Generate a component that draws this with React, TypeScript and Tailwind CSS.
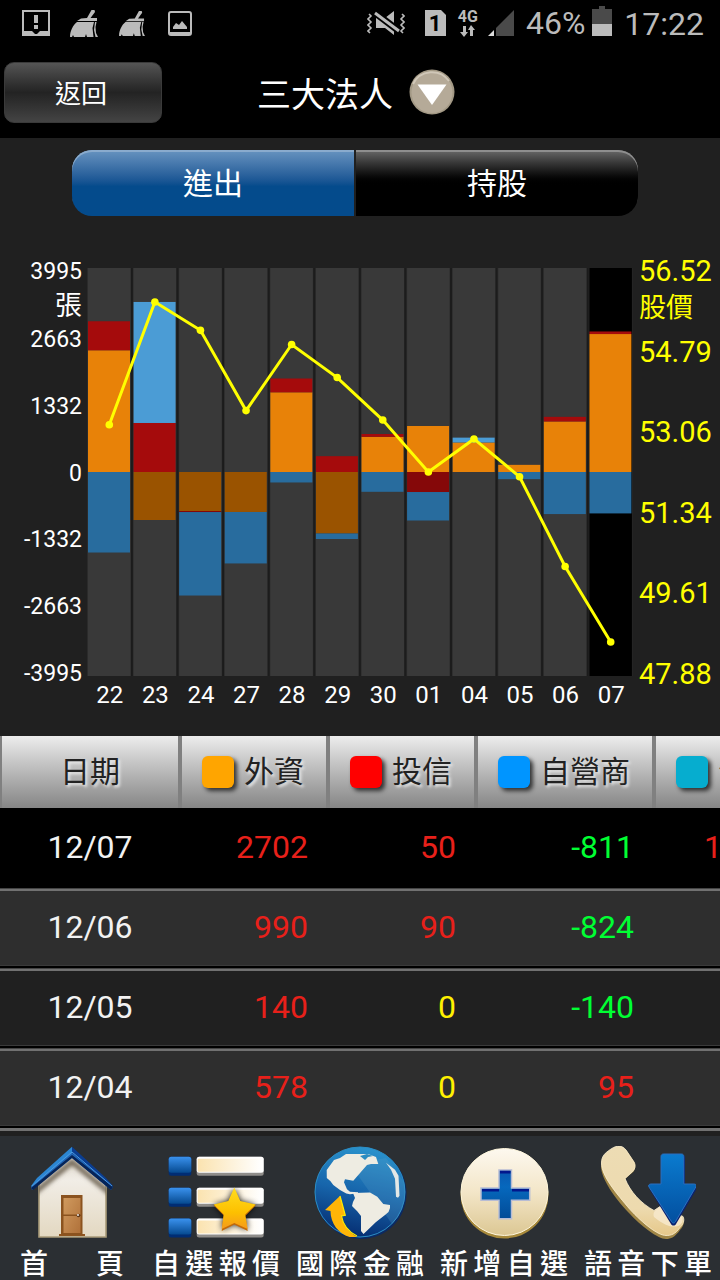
import type { ReactNode } from 'react';
import clsx from 'clsx';

type Day = {
    date: string;
    foreign: number;
    trust: number;
    dealer: number;
    price: number;
};

const days: Day[] = [
    { date: '11/22', foreign: 2384, trust: 568, dealer: -1577, price: 53.2 },
    { date: '11/23', foreign: -940, trust: 960, dealer: 2370, price: 55.8 },
    { date: '11/24', foreign: -764, trust: -20, dealer: -1635, price: 55.2 },
    { date: '11/27', foreign: -783, trust: 0, dealer: -1008, price: 53.5 },
    { date: '11/28', foreign: 1561, trust: 270, dealer: -205, price: 54.9 },
    { date: '11/29', foreign: -1204, trust: 310, dealer: -108, price: 54.2 },
    { date: '11/30', foreign: 689, trust: 55, dealer: -388, price: 53.3 },
    { date: '12/01', foreign: 901, trust: -392, dealer: -558, price: 52.2 },
    { date: '12/04', foreign: 578, trust: 0, dealer: 95, price: 52.9 },
    { date: '12/05', foreign: 140, trust: 0, dealer: -140, price: 52.1 },
    { date: '12/06', foreign: 990, trust: 90, dealer: -824, price: 50.2 },
    { date: '12/07', foreign: 2702, trust: 50, dealer: -811, price: 48.6 },
];

const volumeTicks = ['3995', '2663', '1332', '0', '-1332', '-2663', '-3995'];
const priceTicks = ['56.52', '54.79', '53.06', '51.34', '49.61', '47.88'];

const MAX_VOLUME = 3995;
const MAX_PRICE = 56.52;
const MIN_PRICE = 47.88;
const PLOT_W = 547;
const PLOT_H = 408;
const STEP = PLOT_W / days.length;

const colors = {
    foreign: ['#e88208', '#9a5300'],
    trust: ['#a50b0c', '#850809'],
    dealer: ['#4b9cd5', '#286c9e'],
};

function Broom({ className }: { className: string }) {
    return (
        <svg viewBox="0 0 28 27" className={className} fill="#bbbbbb" aria-hidden="true">
            <path d="M21.500 0h3l.5 2-4.500 6H27v3H7l4-2.500 6-.5z" />
            <path d="M7 12h17l-1.500 6 1 9H17l-1-3-1 3H4l-1-2-1 2H0c0-6 3-12 7-15z" />
            <path d="M25 12h1.500l-1 5 .5 6 2 4h-2.500L24 20z" />
        </svg>
    );
}

function StatusBar() {
    return (
        <div className="flex h-[46px] items-center justify-between pr-4 pl-[22px] text-[#bbbbbb]">
            <div className="flex items-center">
                <svg viewBox="0 0 28 26" className="h-[26px] w-7" aria-hidden="true">
                    <path d="M1 1h26v24H1z" fill="none" stroke="#bbbbbb" strokeWidth="2" />
                    <path d="M1 21h9l4 4 4-4h9v4H1z" fill="#bbbbbb" />
                    <path d="M12 5h4v8h-4zM12 15h4v4h-4z" fill="#bbbbbb" />
                </svg>
                <Broom className="ml-5 h-[27px] w-7" />
                <Broom className="ml-[21px] h-[25px] w-[26px]" />
                <svg viewBox="0 0 24 25" className="ml-[23px] h-[25px] w-6" aria-hidden="true">
                    <rect x="1" y="1" width="22" height="23" rx="2" fill="none" stroke="#bbbbbb" strokeWidth="2" />
                    <path d="M1 21h22v2l-1 1H2l-1-1z" fill="#bbbbbb" />
                    <path d="M5 18v-2l3-4 3 2 3-4 5 6v2z" fill="#bbbbbb" />
                </svg>
            </div>
            <div className="flex items-center">
                <svg viewBox="0 0 38 26" className="h-[26px] w-[38px]" aria-hidden="true">
                    <path d="M9 8h9l9-7v24l-9-7H9z" fill="#bbbbbb" />
                    <path d="M7 2l25 19" stroke="#000000" strokeWidth="7" />
                    <path d="M8 3l24 18" stroke="#bbbbbb" strokeWidth="3" />
                    <path
                        d="M2 4l2 2-3 3 3 3-3 3 3 3-3 3 2 2M35 4l2 2-3 3 3 3-3 3 3 3-3 3 2 2"
                        fill="none"
                        stroke="#bbbbbb"
                        strokeWidth="1.600"
                    />
                </svg>
                <svg viewBox="0 0 21 26" className="ml-5 h-[26px] w-[21px]" aria-hidden="true">
                    <path d="M0 0h16l5 5v21H0z" fill="#bbbbbb" />
                    <text x="10" y="21" textAnchor="middle" fontSize="22" fontWeight="700" fontFamily="Roboto, sans-serif">
                        1
                    </text>
                </svg>
                <div className="ml-3 flex flex-col items-center">
                    <span className="text-base leading-4 font-bold">4G</span>
                    <svg viewBox="0 0 16 12" className="h-3 w-4" fill="#bbbbbb" aria-hidden="true">
                        <path d="M3 1h3v6h2l-4 5-4-5h3zM10 11h3V5h2l-4-5-3 5h2z" />
                    </svg>
                </div>
                <svg viewBox="0 0 26 26" className="ml-[10px] h-[26px] w-[26px]" aria-hidden="true">
                    <path d="M26 0v26H8V18z" fill="#4a4a4a" />
                    <path d="M6 20v6H0z" fill="#dddddd" />
                </svg>
                <span className="ml-3 text-[32px] leading-[46px]">46%</span>
                <svg viewBox="0 0 20 30" className="mb-1 ml-[7px] h-[30px] w-5" aria-hidden="true">
                    <path d="M7 0h6v3h7v15H0V3h7z" fill="#4a4a4a" />
                    <path d="M0 18h20v12H0z" fill="#bbbbbb" />
                </svg>
                <span className="ml-3 pt-[2px] text-[32px] leading-[46px]">17:22</span>
            </div>
        </div>
    );
}

function Chart() {
    const volumeY = (v: number) => PLOT_H / 2 - (v / MAX_VOLUME) * (PLOT_H / 2);
    const priceY = (p: number) => ((MAX_PRICE - p) / (MAX_PRICE - MIN_PRICE)) * PLOT_H;
    const centerX = (i: number) => (i + 0.5) * STEP - 0.5;

    // positive values stack upwards from zero, negative ones downwards
    const bars = days.flatMap((day, i) => {
        let up = 0;
        let down = 0;
        return (['foreign', 'trust', 'dealer'] as const).map((key) => {
            const value = day[key];
            const start = value >= 0 ? up : down;
            if (value >= 0) up += value;
            else down += value;
            const top = volumeY(Math.max(start, start + value));
            return {
                id: `${day.date}-${key}`,
                x: i * STEP + 1,
                y: top,
                height: (Math.abs(value) / MAX_VOLUME) * (PLOT_H / 2),
                fill: colors[key][value >= 0 ? 0 : 1],
            };
        });
    });

    return (
        <div className="mt-[38px] flex">
            <div className="flex h-[438px] w-[82px] flex-col text-right text-[23px] leading-9">
                {volumeTicks.map((tick, i) => (
                    <div key={tick} className={i < volumeTicks.length - 1 ? 'flex-1' : 'flex-none'}>
                        <div>{tick}</div>
                        {i === 0 && <div className="text-[27px] leading-8">張</div>}
                    </div>
                ))}
            </div>
            <div className="min-w-0 flex-1 pt-[14px] pl-[5px]">
                <svg viewBox={`0 0 ${PLOT_W} ${PLOT_H}`} preserveAspectRatio="none" className="h-[408px] w-full">
                    {days.map((day, i) => (
                        <g key={day.date}>
                            <rect x={i * STEP} y="0" width="44" height={PLOT_H} fill="#2b2b2b" />
                            <rect
                                x={i * STEP + 1}
                                y="0"
                                width="42.5"
                                height={PLOT_H}
                                fill={i === days.length - 1 ? '#000000' : '#393939'}
                            />
                            {i > 0 && <rect x={i * STEP - 1.4} y="0" width="1.6" height={PLOT_H} fill="#1c1c1c" />}
                        </g>
                    ))}
                    {bars.map((bar) => (
                        <rect key={bar.id} x={bar.x} y={bar.y} width="42" height={bar.height} fill={bar.fill} />
                    ))}
                    <polyline
                        points={days.map((day, i) => `${centerX(i)},${priceY(day.price)}`).join(' ')}
                        fill="none"
                        stroke="#ffff00"
                        strokeWidth="3"
                    />
                    {days.map((day, i) => (
                        <circle key={day.date} cx={centerX(i)} cy={priceY(day.price)} r="3.8" fill="#ffff00" />
                    ))}
                </svg>
                <div className="flex text-2xl leading-[38px]">
                    {days.map((day) => (
                        <span key={day.date} className="flex-1 text-center">
                            {day.date.slice(3)}
                        </span>
                    ))}
                </div>
            </div>
            <div className="flex h-[437px] w-[86px] flex-col pl-[5px] text-[29px] leading-[34px] text-[#ffff00]">
                {priceTicks.map((tick, i) => (
                    <div key={tick} className={i < priceTicks.length - 1 ? 'flex-1' : 'flex-none'}>
                        <div>{tick}</div>
                        {i === 0 && <div className="text-[27px] leading-10">股價</div>}
                    </div>
                ))}
            </div>
        </div>
    );
}

function HeaderCell({ swatch, children }: { swatch?: string; children: ReactNode }) {
    return (
        <th scope="col" className="border-x-2 border-[#808080] bg-linear-to-b from-[#ededed] to-[#868686] p-0 font-normal">
            <div
                className={clsx(
                    'flex items-center gap-[10px] whitespace-nowrap [text-shadow:2px_2px_3px_#eeeeee]',
                    swatch ? 'pl-5' : 'justify-center',
                )}
            >
                {swatch && <span className={clsx('size-8 rounded-md shadow-[3px_3px_4px_#333333]', swatch)} />}
                {children}
            </div>
        </th>
    );
}

function Amount({ value }: { value: number }) {
    return (
        <td
            className={clsx(
                'p-0 pr-5 pb-[2px] text-right',
                value > 0 && 'text-[#e8201a]',
                value < 0 && 'text-[#00ff33]',
                value === 0 && 'text-[#fff000]',
            )}
        >
            {value}
        </td>
    );
}

function HistoryTable() {
    const rows = days.slice(-4).reverse();

    return (
        <div className="mt-[22px] overflow-hidden">
            <table className="w-[796px] table-fixed border-separate border-spacing-0">
                <colgroup>
                    <col className="w-[180px]" />
                    <col className="w-[148px]" />
                    <col className="w-[148px]" />
                    <col className="w-[178px]" />
                    <col />
                </colgroup>
                <thead>
                    <tr className="h-[72px] text-3xl text-[#222222]">
                        <HeaderCell>日期</HeaderCell>
                        <HeaderCell swatch="bg-[#ffa500]">外資</HeaderCell>
                        <HeaderCell swatch="bg-[#ff0000]">投信</HeaderCell>
                        <HeaderCell swatch="bg-[#0095ff]">自營商</HeaderCell>
                        <HeaderCell swatch="bg-[#06adcf]">合計</HeaderCell>
                    </tr>
                </thead>
                <tbody>
                    {rows.map((row, i) => (
                        <tr
                            key={row.date}
                            className={clsx(
                                'h-20 text-[32px] leading-10',
                                i === 0 && 'bg-black',
                                i > 0 && 'shadow-[inset_0_1px_0_#444444,inset_0_3px_0_#717171,inset_0_-2px_0_#000000,inset_0_-3px_0_#3a3a3a]',
                                i > 0 && (i % 2 ? 'bg-[#2e2e2e]' : 'bg-[#202020]'),
                            )}
                        >
                            <td className="p-0 pb-[2px] text-center text-[#f2f2f2]">{row.date}</td>
                            <Amount value={row.foreign} />
                            <Amount value={row.trust} />
                            <Amount value={row.dealer} />
                            <Amount value={row.foreign + row.trust + row.dealer} />
                        </tr>
                    ))}
                </tbody>
            </table>
            <div className="h-[3px] bg-[#717171]" />
        </div>
    );
}

function HomeIcon() {
    return (
        <svg viewBox="0 0 96 96" className="size-24" aria-hidden="true">
            <defs>
                <linearGradient id="wall" x2="0" y2="1">
                    <stop offset="0" stopColor="#ddd6ca" />
                    <stop offset=".3" stopColor="#f1ede6" />
                    <stop offset="1" stopColor="#e3d8c1" />
                </linearGradient>
                <linearGradient id="wood" x2="1" y2="1">
                    <stop offset="0" stopColor="#d09a5e" />
                    <stop offset="1" stopColor="#b0713a" />
                </linearGradient>
                <filter id="eave" x="-20%" y="-20%" width="140%" height="140%">
                    <feGaussianBlur stdDeviation="2" />
                </filter>
                <clipPath id="wallClip">
                    <path d="M15 91V38L48 10l34 28v53z" />
                </clipPath>
            </defs>
            <path d="M15 91V38L48 10l34 28v53z" fill="url(#wall)" stroke="#a99b79" strokeWidth="1.6" />
            <path d="M10 47L48 16l38 31" fill="none" stroke="#6f6554" strokeWidth="5" filter="url(#eave)" clipPath="url(#wallClip)" />
            <path d="M7 40L13 32 48 .7V12L9 43z" fill="#2b86d3" />
            <path d="M48 .7L82 32l7 8-3 3L48 12z" fill="#0a3d91" />
            <path d="M7 41l1 3 40-33 39 33 2-3L48 7z" fill="#2165b5" />
            <path d="M7 42l2 2 39-32 39 32 2-3-41-32z" fill="#062458" />
            <path d="M8 40L48 6l40 34" fill="none" stroke="#4d9be0" strokeWidth="1" />
            <path d="M35 88h26v2H35z" fill="#8f5520" />
            <path d="M37 49h21.500v40H37z" fill="#8b531f" />
            <path d="M39.500 52h17v16.500h-17zM39.500 70h17v17h-17z" fill="url(#wood)" />
            <circle cx="54.500" cy="69.500" r="1.800" fill="#5a3517" />
            <circle cx="54" cy="69" r=".9" fill="#ffffff" />
        </svg>
    );
}

function WatchlistIcon() {
    return (
        <svg viewBox="0 0 96 96" className="size-24" aria-hidden="true">
            <defs>
                <linearGradient id="bullet" x2="0" y2="1">
                    <stop offset="0" stopColor="#3a92ee" />
                    <stop offset="1" stopColor="#064a90" />
                </linearGradient>
                <linearGradient id="strip">
                    <stop offset="0" stopColor="#fbe3b0" />
                    <stop offset="1" stopColor="#ffffff" />
                </linearGradient>
                <linearGradient id="star" x2="0" y2="1">
                    <stop offset="0" stopColor="#ffdd20" />
                    <stop offset=".6" stopColor="#fdc000" />
                    <stop offset="1" stopColor="#f59a1c" />
                </linearGradient>
                <filter id="starShade" x="-30%" y="-30%" width="160%" height="160%">
                    <feGaussianBlur stdDeviation="3" />
                </filter>
            </defs>
            {[10.7, 41.7, 72.5].map((y) => (
                <g key={y}>
                    <rect x=".7" y={y} width="22.600" height="19" rx="2.500" fill="#002d74" />
                    <rect x=".7" y={y} width="22.600" height="16" rx="2.500" fill="url(#bullet)" />
                    <rect x="28.700" y={y} width="67" height="19" rx="2.500" fill="#8f8d8a" />
                    <rect x="28.700" y={y} width="67" height="16" rx="2.500" fill="#ffffff" />
                    <rect x="29.700" y={y + 2} width="64" height="13" rx="1" fill="url(#strip)" />
                </g>
            ))}
            <path
                d="M66.300 42l6 13 15.400 4-10.500 10.500 2.500 14.500-13.400-6-12.600 6 2-14.500L45.700 59l14.600-4z"
                fill="#000000"
                opacity=".9"
                filter="url(#starShade)"
            />
            <path d="M66.300 43l6 13 15.400 3.500-10.500 10.500 2.500 15-13.400-6.500-12.600 6.500 2-15.500L45.700 59.500l14.600-4z" fill="#c46a08" />
            <path d="M66.300 41.500l6 13.500 15.400 3.500-10.500 10 2.500 14.500-13.400-6-12.600 6 2-14.500L45.700 58.500l14.600-3.500z" fill="url(#star)" />
        </svg>
    );
}

function GlobeIcon() {
    return (
        <svg viewBox="0 0 96 96" className="size-24" aria-hidden="true">
            <defs>
                <linearGradient id="sea" x1=".6" x2=".4" y2="1">
                    <stop offset="0" stopColor="#2a93cd" />
                    <stop offset=".5" stopColor="#1765ab" />
                    <stop offset="1" stopColor="#052c70" />
                </linearGradient>
            </defs>
            <circle cx="49" cy="47.500" r="45.500" fill="#0b2a63" />
            <circle cx="48" cy="46" r="45" fill="url(#sea)" stroke="#2b8ec6" strokeWidth="1" />
            <path d="M38 18L80 78a46 46 0 0 0 12-42L74 12z" fill="#5a9fc9" opacity=".25" />
            <path
                d="M14.700 24L22 14l6-2 6-4h22l8 3 2.300 7H59l-4 1-13.700 15.700L33 33.300l-1 3 3 7 3 2.400 8 .6v1l-8 1-3.700-.7L28 44l-6.700-5-3-4-3.500-3z"
                fill="#eeece2"
            />
            <path d="M48 10l7-2 6 2-5 1-3 3z" fill="#2b8cc0" />
            <path d="M41 47l17-.5 7.300 4.200 6 7.300 6.700 1v3l-1.500 4L73 69l-9 7-12.500 12-2.500-3V70l-4-5-5-5 1-4 2-4z" fill="#eeece2" />
            <path d="M74 16.700l9 7 3.500 6 1 20-1.500 2-2-1-1-18-4-9z" fill="#e4e8e6" />
            <path d="M28 50L13 64l5.500 1c0 12 8 23 19 26h7.500C37 86 31 79 29.500 70l3.800-.7z" fill="#ffb507" />
            <path d="M28 50l5.300 19.300-3.800.7C31 79 37 86 45 90" fill="none" stroke="#ffec00" strokeWidth="1.200" />
        </svg>
    );
}

function AddIcon() {
    return (
        <svg viewBox="0 0 96 96" className="size-24" aria-hidden="true">
            <defs>
                <linearGradient id="coin" x2="0" y2="1">
                    <stop offset="0" stopColor="#fdf8ef" />
                    <stop offset=".5" stopColor="#f3e6c8" />
                    <stop offset="1" stopColor="#dcc793" />
                </linearGradient>
                <linearGradient id="cross" x2="0" y2="1">
                    <stop offset="0" stopColor="#0a57b0" />
                    <stop offset=".35" stopColor="#0668bd" />
                    <stop offset="1" stopColor="#024b97" />
                </linearGradient>
            </defs>
            <circle cx="48.500" cy="48.500" r="44" fill="#a88a3c" />
            <circle cx="48.500" cy="46" r="43.500" fill="url(#coin)" stroke="#fff7dd" strokeWidth="1" />
            <path
                d="M43 24h12.500v18h18.200v12.300H55.500v18.400H43V54.300H25V42h18z"
                fill="url(#cross)"
                stroke="#b7bcd4"
                strokeWidth="1.500"
            />
            <path d="M44 24.800h10.500v2.700H44zM26 43h17v2.500H26zM56 43h17v2.500H56z" fill="#02178c" />
        </svg>
    );
}

function PhoneIcon() {
    return (
        <svg viewBox="0 0 96 96" className="size-24" aria-hidden="true">
            <defs>
                <linearGradient id="handset" x2="0" y2="1">
                    <stop offset="0" stopColor="#eddcb4" />
                    <stop offset=".7" stopColor="#eddaae" />
                    <stop offset="1" stopColor="#e6c88a" />
                </linearGradient>
                <linearGradient id="down" x2="0" y2="1">
                    <stop offset="0" stopColor="#0a7bcf" />
                    <stop offset="1" stopColor="#034f9f" />
                </linearGradient>
            </defs>
            <path
                d="M1 20C1 12 5 8 11 4c7-5 12-4 16 1l8 12c1 4 0 8-3 10l-7 6c5 12 16 25 29 32l6-4 23 12c2 4 0 8-3 11-5 7-9 9-14 9-8 0-25-13-38-27C15 52 1 33 1 20z"
                fill="#a08646"
            />
            <path
                d="M1.500 17C1.500 10 5 7 11 3c6-4 11-4 15 1l8 12c2 4 1 8-3 11l-6 5.500c5 13 16 25 29 32l6-4 23 10c2 4 0 8-3 11-5 7-9 8-14 8-8 0-23-12-36-26C16 47 1.500 30 1.500 17z"
                fill="url(#handset)"
                stroke="#fbf0d2"
                strokeWidth=".8"
            />
            <path d="M60 61l22 10c2 4-1 8-4 9-7 2-14-1-24-9-2-4 2-8 6-10z" fill="#f7ead0" opacity=".8" />
            <path d="M64 9h18c2 0 3 1 3 3v28h8c3 0 4 2 3 4L76 78c-1 2-4 2-5 0L50 44c-1-2 0-4 2-4h9V12c0-2 1-3 3-3z" fill="#0a2370" />
            <path
                d="M63.500 8h18c1.500 0 2.300 1 2.300 2.500V38h10c2.500 0 3 1.500 2 3L75.500 75.500c-1 2-3 2-4 0L49 41c-1-1.500 0-3 2-3h10V10.500C61 9 62 8 63.500 8z"
                fill="url(#down)"
                stroke="#2d6fbf"
                strokeWidth="1"
            />
        </svg>
    );
}

const navItems = [
    { label: '首頁', icon: <HomeIcon />, labelWidth: 'w-[104px]' },
    { label: '自選報價', icon: <WatchlistIcon />, labelWidth: 'w-[128px]' },
    { label: '國際金融', icon: <GlobeIcon />, labelWidth: 'w-[128px]' },
    { label: '新增自選', icon: <AddIcon />, labelWidth: 'w-[128px]' },
    { label: '語音下單', icon: <PhoneIcon />, labelWidth: 'w-[128px]' },
];

export default function App() {
    return (
        <div className="flex h-screen flex-col overflow-hidden bg-[#202020] font-[Roboto,'Noto_Sans_CJK_TC',sans-serif] text-white">
            <div className="bg-black">
                <StatusBar />
                <header className="grid h-[92px] grid-cols-[1fr_auto_1fr] items-center pr-3 pl-1">
                    <button
                        type="button"
                        className="h-[61px] w-[158px] justify-self-start rounded-[10px] border border-[#3a3a3a] bg-linear-to-b from-[#555555] via-[#232323] to-[#444444] pt-1 pr-1 text-[26px]"
                    >
                        返回
                    </button>
                    <button type="button" className="flex items-center gap-4">
                        <h1 className="pt-[6px] text-[34px] leading-[48px]">三大法人</h1>
                        <svg viewBox="0 0 46 46" className="size-[46px]" aria-hidden="true">
                            <circle cx="23" cy="23" r="22.500" fill="#a39985" />
                            <circle cx="23" cy="23.500" r="20.500" fill="#b5aa98" />
                            <path d="M4 15a21 21 0 0 1 36-3" fill="none" stroke="#d0c7b8" strokeWidth="2" />
                            <path d="M8.500 15.500h29L23 36z" fill="#ffffff" />
                        </svg>
                    </button>
                </header>
            </div>

            <main className="min-h-0 flex-1 overflow-hidden">
                <div className="flex gap-[2px] pt-3 pr-[82px] pl-[72px] text-3xl [text-shadow:1px_2px_3px_#000000]">
                    <button
                        type="button"
                        className="h-[66px] flex-1 rounded-l-[20px] bg-linear-to-b from-[#6894c0] to-[#044b8c] to-55% pt-[2px] shadow-[inset_0_2px_0_#8aabcd]"
                    >
                        進出
                    </button>
                    <button
                        type="button"
                        className="h-[66px] flex-1 rounded-r-[20px] bg-linear-to-b from-[#6a6a6a] to-black to-55% pt-[2px] shadow-[inset_0_2px_0_#8e8e8e]"
                    >
                        持股
                    </button>
                </div>
                <Chart />
                <HistoryTable />
            </main>

            <nav className="grid h-36 grid-cols-5 bg-[#2b2f33] pt-[10px]">
                {navItems.map((item) => (
                    <a key={item.label} href="#" className="flex flex-col items-center">
                        {item.icon}
                        <span className={clsx('pt-1 text-[28px] leading-[38px] font-medium [text-align-last:justify]', item.labelWidth)}>
                            {item.label}
                        </span>
                    </a>
                ))}
            </nav>
        </div>
    );
}
